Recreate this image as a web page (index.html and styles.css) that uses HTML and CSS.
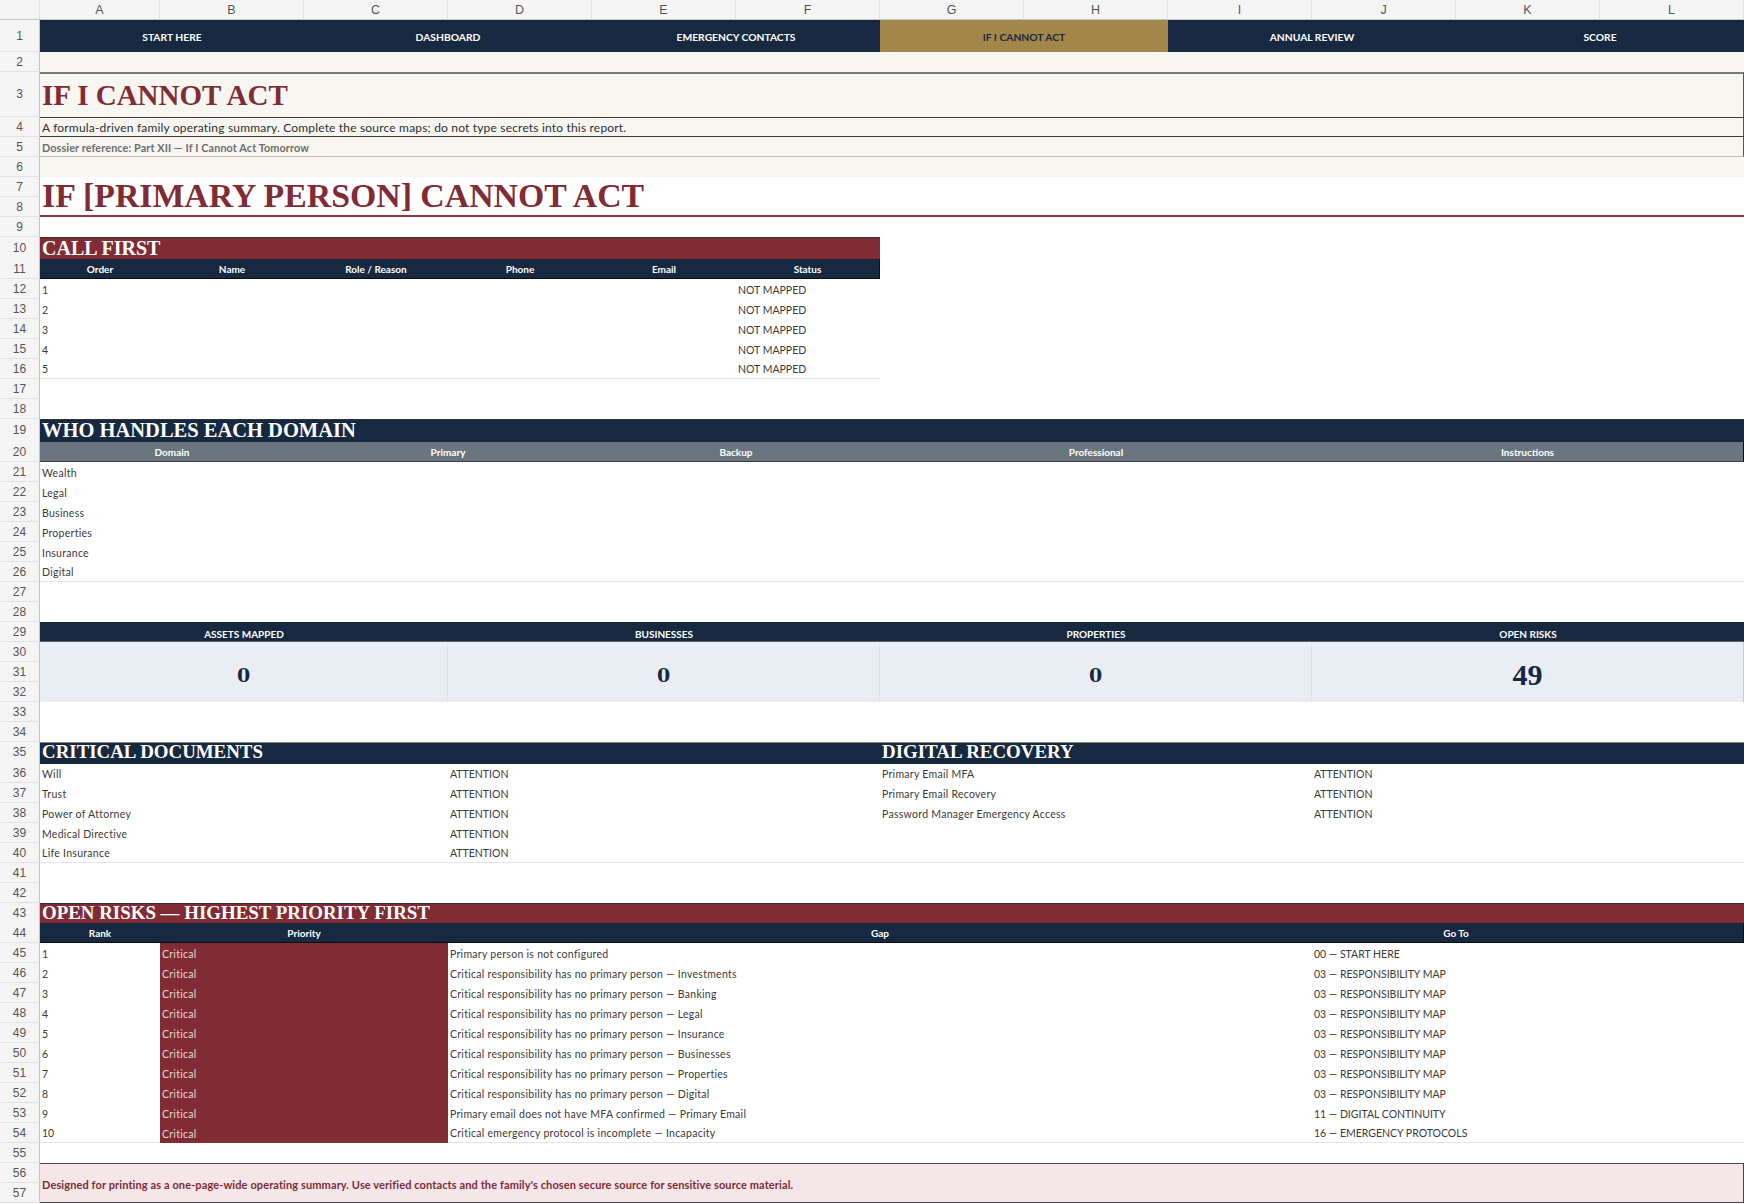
FILE: index.html
```html
<!DOCTYPE html>
<html lang="en">
<head>
<meta charset="utf-8">
<title>If I Cannot Act</title>
<link rel="stylesheet" href="styles.css">
</head>
<body>
<div class="sheet">
  <div class="row colhead">
    <div class="corner"></div>
    <div class="ch">A</div><div class="ch">B</div><div class="ch">C</div><div class="ch">D</div>
    <div class="ch">E</div><div class="ch">F</div><div class="ch">G</div><div class="ch">H</div>
    <div class="ch">I</div><div class="ch">J</div><div class="ch">K</div><div class="ch">L</div>
  </div>

  <div class="row h32">
    <div class="rn">1</div>
    <div class="c s2 nav">START HERE</div>
    <div class="c s2 nav">DASHBOARD</div>
    <div class="c s2 nav">EMERGENCY CONTACTS</div>
    <div class="c s2 nav active">IF I CANNOT ACT</div>
    <div class="c s2 nav">ANNUAL REVIEW</div>
    <div class="c s2 nav">SCORE</div>
  </div>

  <div class="row"><div class="rn">2</div><div class="c s12 cream"></div></div>
  <div class="row h45"><div class="rn">3</div><div class="c s12 cream title-cell"><h1 class="doc-title">IF I CANNOT ACT</h1></div></div>
  <div class="row"><div class="rn">4</div><div class="c s12 cream desc">A formula-driven family operating summary. Complete the source maps; do not type secrets into this report.</div></div>
  <div class="row"><div class="rn">5</div><div class="c s12 cream ref">Dossier reference: Part XII — If I Cannot Act Tomorrow</div></div>
  <div class="row"><div class="rn">6</div><div class="c s12 cream"></div></div>

  <div class="block b2">
    <div class="rn">7</div>
    <div class="c s12 r2 big-title-cell"><h2 class="big-title">IF [PRIMARY PERSON] CANNOT ACT</h2></div>
    <div class="rn">8</div>
  </div>

  <div class="row"><div class="rn">9</div></div>

  <div class="row h22">
    <div class="rn">10</div>
    <div class="c s6 band maroon topline t-call">CALL FIRST</div>
  </div>
  <div class="row">
    <div class="rn">11</div>
    <div class="c th">Order</div><div class="c th">Name</div><div class="c th">Role / Reason</div>
    <div class="c th">Phone</div><div class="c th">Email</div><div class="c th th-end">Status</div>
  </div>
  <div class="row"><div class="rn">12</div><div class="c">1</div><div class="c s4"></div><div class="c">NOT MAPPED</div></div>
  <div class="row"><div class="rn">13</div><div class="c">2</div><div class="c s4"></div><div class="c">NOT MAPPED</div></div>
  <div class="row"><div class="rn">14</div><div class="c">3</div><div class="c s4"></div><div class="c">NOT MAPPED</div></div>
  <div class="row"><div class="rn">15</div><div class="c">4</div><div class="c s4"></div><div class="c">NOT MAPPED</div></div>
  <div class="row"><div class="rn">16</div><div class="c endline">5</div><div class="c s4 endline"></div><div class="c endline">NOT MAPPED</div></div>
  <div class="row"><div class="rn">17</div></div>
  <div class="row"><div class="rn">18</div></div>

  <div class="row h23">
    <div class="rn">19</div>
    <div class="c s12 band navy topline t-who">WHO HANDLES EACH DOMAIN</div>
  </div>
  <div class="row">
    <div class="rn">20</div>
    <div class="c s2 th gray">Domain</div>
    <div class="c s2 th gray">Primary</div>
    <div class="c s2 th gray">Backup</div>
    <div class="c s3 th gray">Professional</div>
    <div class="c s3 th gray th-end">Instructions</div>
  </div>
  <div class="row"><div class="rn">21</div><div class="c s12 lc">Wealth</div></div>
  <div class="row"><div class="rn">22</div><div class="c s12 lc">Legal</div></div>
  <div class="row"><div class="rn">23</div><div class="c s12 lc">Business</div></div>
  <div class="row"><div class="rn">24</div><div class="c s12 lc">Properties</div></div>
  <div class="row"><div class="rn">25</div><div class="c s12 lc">Insurance</div></div>
  <div class="row"><div class="rn">26</div><div class="c s12 lc endline">Digital</div></div>
  <div class="row"><div class="rn">27</div></div>
  <div class="row"><div class="rn">28</div></div>

  <div class="row">
    <div class="rn">29</div>
    <div class="c s3 stat-label">ASSETS MAPPED</div>
    <div class="c s3 stat-label">BUSINESSES</div>
    <div class="c s3 stat-label">PROPERTIES</div>
    <div class="c s3 stat-label">OPEN RISKS</div>
  </div>
  <div class="block b3">
    <div class="rn">30</div>
    <div class="c s3 r3 stat"><span class="zero">0</span></div>
    <div class="c s3 r3 stat"><span class="zero">0</span></div>
    <div class="c s3 r3 stat"><span class="zero">0</span></div>
    <div class="c s3 r3 stat stat-end"><span class="num">49</span></div>
    <div class="rn">31</div>
    <div class="rn">32</div>
  </div>
  <div class="row"><div class="rn">33</div></div>
  <div class="row"><div class="rn">34</div></div>

  <div class="row h21">
    <div class="rn">35</div>
    <div class="c s6 band navy grayline t-small">CRITICAL DOCUMENTS</div>
    <div class="c s6 band navy grayline t-small">DIGITAL RECOVERY</div>
  </div>
  <div class="row"><div class="rn">36</div><div class="c s3 lc">Will</div><div class="c s3">ATTENTION</div><div class="c s3 lc">Primary Email MFA</div><div class="c s3">ATTENTION</div></div>
  <div class="row"><div class="rn">37</div><div class="c s3 lc">Trust</div><div class="c s3">ATTENTION</div><div class="c s3 lc">Primary Email Recovery</div><div class="c s3">ATTENTION</div></div>
  <div class="row"><div class="rn">38</div><div class="c s3 lc">Power of Attorney</div><div class="c s3">ATTENTION</div><div class="c s3 lc">Password Manager Emergency Access</div><div class="c s3">ATTENTION</div></div>
  <div class="row"><div class="rn">39</div><div class="c s3 lc">Medical Directive</div><div class="c s3">ATTENTION</div><div class="c s6"></div></div>
  <div class="row"><div class="rn">40</div><div class="c s3 lc endline">Life Insurance</div><div class="c s3 endline">ATTENTION</div><div class="c s6 endline"></div></div>
  <div class="row"><div class="rn">41</div></div>
  <div class="row"><div class="rn">42</div></div>

  <div class="row">
    <div class="rn">43</div>
    <div class="c s12 band maroon topline t-small">OPEN RISKS — HIGHEST PRIORITY FIRST</div>
  </div>
  <div class="row">
    <div class="rn">44</div>
    <div class="c th">Rank</div>
    <div class="c s2 th">Priority</div>
    <div class="c s6 th">Gap</div>
    <div class="c s2 th">Go To</div>
    <div class="c th th-end"></div>
  </div>
  <div class="row"><div class="rn">45</div><div class="c">1</div><div class="c s2 crit lc">Critical</div><div class="c s6 lc">Primary person is not configured</div><div class="c s3">00 — START HERE</div></div>
  <div class="row"><div class="rn">46</div><div class="c">2</div><div class="c s2 crit lc">Critical</div><div class="c s6 lc">Critical responsibility has no primary person — Investments</div><div class="c s3">03 — RESPONSIBILITY MAP</div></div>
  <div class="row"><div class="rn">47</div><div class="c">3</div><div class="c s2 crit lc">Critical</div><div class="c s6 lc">Critical responsibility has no primary person — Banking</div><div class="c s3">03 — RESPONSIBILITY MAP</div></div>
  <div class="row"><div class="rn">48</div><div class="c">4</div><div class="c s2 crit lc">Critical</div><div class="c s6 lc">Critical responsibility has no primary person — Legal</div><div class="c s3">03 — RESPONSIBILITY MAP</div></div>
  <div class="row"><div class="rn">49</div><div class="c">5</div><div class="c s2 crit lc">Critical</div><div class="c s6 lc">Critical responsibility has no primary person — Insurance</div><div class="c s3">03 — RESPONSIBILITY MAP</div></div>
  <div class="row"><div class="rn">50</div><div class="c">6</div><div class="c s2 crit lc">Critical</div><div class="c s6 lc">Critical responsibility has no primary person — Businesses</div><div class="c s3">03 — RESPONSIBILITY MAP</div></div>
  <div class="row"><div class="rn">51</div><div class="c">7</div><div class="c s2 crit lc">Critical</div><div class="c s6 lc">Critical responsibility has no primary person — Properties</div><div class="c s3">03 — RESPONSIBILITY MAP</div></div>
  <div class="row"><div class="rn">52</div><div class="c">8</div><div class="c s2 crit lc">Critical</div><div class="c s6 lc">Critical responsibility has no primary person — Digital</div><div class="c s3">03 — RESPONSIBILITY MAP</div></div>
  <div class="row"><div class="rn">53</div><div class="c">9</div><div class="c s2 crit lc">Critical</div><div class="c s6 lc">Primary email does not have MFA confirmed — Primary Email</div><div class="c s3">11 — DIGITAL CONTINUITY</div></div>
  <div class="row"><div class="rn">54</div><div class="c endline">10</div><div class="c s2 crit lc">Critical</div><div class="c s6 lc endline">Critical emergency protocol is incomplete — Incapacity</div><div class="c s3 endline">16 — EMERGENCY PROTOCOLS</div></div>
  <div class="row"><div class="rn">55</div></div>

  <div class="block b2">
    <div class="rn">56</div>
    <div class="c s12 r2 footer">Designed for printing as a one-page-wide operating summary. Use verified contacts and the family's chosen secure source for sensitive source material.</div>
    <div class="rn">57</div>
  </div>
</div>
</body>
</html>
```

FILE: styles.css
```css
* { box-sizing: border-box; margin: 0; padding: 0; }

html, body { background: #ffffff; }

body {
  width: 1744px;
  height: 1204px;
  overflow: hidden;
  font-family: Lato, "Liberation Sans", sans-serif;
  color: #333333;
}

.sheet { width: 1744px; }

.row,
.block {
  display: grid;
  grid-template-columns: 40px 120px repeat(11, 144px);
  height: 20px;
}

.block.b2 { grid-template-rows: 20px 20px; height: 40px; }
.block.b3 { grid-template-rows: 20px 20px 20px; height: 60px; }

.row.h21 { height: 21px; }
.row.h22 { height: 22px; }
.row.h23 { height: 23px; }
.row.h32 { height: 32px; }
.row.h45 { height: 45px; }

/* headers of the spreadsheet grid */
.colhead { height: 20px; }
.corner,
.ch {
  background: #f5f5f5;
  border-right: 1px solid #e0e0e0;
  border-bottom: 1px solid #c4c4c4;
}
.ch {
  display: flex;
  align-items: center;
  justify-content: center;
  font-family: "Liberation Sans", Arial, sans-serif;
  font-size: 12.5px;
  color: #555555;
}

.rn {
  background: #f5f5f5;
  border-right: 1px solid #c4c4c4;
  border-bottom: 1px solid #e2e2e2;
  display: flex;
  align-items: center;
  justify-content: center;
  font-family: "Liberation Sans", Arial, sans-serif;
  font-size: 12px;
  color: #555555;
}

/* generic cell */
.c {
  display: flex;
  align-items: center;
  padding: 1px 2px 0 2px;
  white-space: nowrap;
  font-size: 10.5px;
  color: #3a3a3a;
  min-width: 0;
}
.lc { letter-spacing: 0.28px; }

.s2 { grid-column: span 2; }
.s3 { grid-column: span 3; }
.s4 { grid-column: span 4; }
.s6 { grid-column: span 6; }
.s12 { grid-column: span 12; }
.r2 { grid-row: span 2; }
.r3 { grid-row: span 3; }

/* navigation row */
.nav {
  background: #172940;
  color: #ffffff;
  font-weight: 700;
  font-size: 10.3px;
  justify-content: center;
}
.nav.active {
  background: #a3864a;
  color: #172940;
}

/* cream intro block */
.cream { background: #f7f6f1; }
.title-cell {
  border-top: 2px solid #7d7d7d;
  border-right: 1px solid #555555;
  align-items: flex-end;
  padding-bottom: 7px;
}
.doc-title {
  font-family: "Liberation Serif", "Times New Roman", serif;
  font-weight: 700;
  font-size: 29px;
  line-height: 1;
  color: #812b35;
}
.desc {
  border-top: 1px solid #3c3c3c;
  border-bottom: 1px solid #3c3c3c;
  border-right: 1px solid #555555;
  font-size: 12px;
  letter-spacing: 0.18px;
  color: #2e2e2e;
}
.ref {
  border-bottom: 1px solid #bdbdbd;
  border-right: 1px solid #555555;
  font-size: 10.8px;
  letter-spacing: 0.12px;
  font-weight: 700;
  color: #6e6e6e;
}

/* big title */
.big-title-cell {
  border-bottom: 2px solid #8f3b45;
  align-items: flex-end;
  padding-bottom: 2px;
}
.big-title {
  font-family: "Liberation Serif", "Times New Roman", serif;
  font-weight: 700;
  font-size: 33.8px;
  line-height: 1;
  color: #812b35;
}

/* section bands */
.band {
  font-family: "Liberation Serif", "Times New Roman", serif;
  font-weight: 700;
  font-size: 20px;
  line-height: 1;
  color: #ffffff;
  padding: 0 2px 2px 2px;
}
.band.t-who { font-size: 20.5px; }
.band.t-small { font-size: 18.9px; }
.maroon { background: #812b35; }
.navy { background: #172940; }
.topline { border-top: 1px solid #333333; }
.grayline { border-top: 1px solid #8a8a8a; }

/* table headers */
.th {
  background: #172940;
  color: #ffffff;
  font-weight: 700;
  font-size: 10px;
  justify-content: center;
  border-bottom: 1px solid #0b0b0b;
}
.th.gray {
  background: #6b7580;
  border-bottom: 1px solid #3a3f46;
}
.th-end { border-right: 1px solid #0e0e0e; }

.endline { border-bottom: 1px solid #e6e6e6; }

/* stats */
.stat-label {
  background: #172940;
  color: #ffffff;
  font-weight: 700;
  font-size: 10px;
  justify-content: center;
  align-items: flex-end;
  padding-bottom: 1px;
  border-bottom: 1px solid #5b6675;
}
.stat {
  background: #e9eef5;
  justify-content: center;
  align-items: center;
  border-right: 1px solid #dde2ea;
  color: #172940;
  padding-top: 6px;
}
.stat-end { border-right: 1px solid #c9ced6; }
.zero {
  font-family: "DejaVu Serif", "Liberation Serif", serif;
  font-weight: 700;
  font-size: 19px;
  line-height: 1;
}
.num {
  font-family: "Liberation Serif", "Times New Roman", serif;
  font-weight: 700;
  font-size: 30px;
  line-height: 1;
}

/* risks */
.crit {
  background: #812b35;
  color: #e6d8da;
}

/* footer */
.footer {
  background: #f4e6e9;
  border-top: 1px solid #444444;
  border-bottom: 1px solid #444444;
  border-right: 1px solid #444444;
  color: #812b35;
  font-weight: 700;
  font-size: 11px;
  letter-spacing: 0.11px;
  padding-top: 2px;
}
```
